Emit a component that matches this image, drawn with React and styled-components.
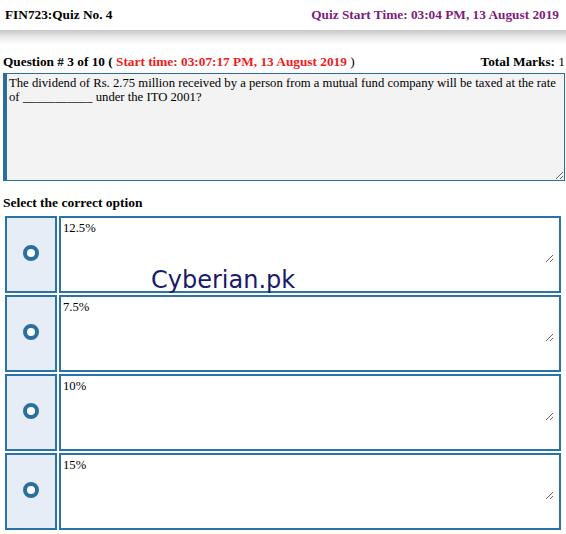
import React from "react";
import styled, { createGlobalStyle } from "styled-components";

const Global = createGlobalStyle`
  html, body { margin: 0; padding: 0; background: #fff; }
  body { font-family: "Liberation Serif", "Times New Roman", serif; color: #000; }
  * { box-sizing: border-box; }
`;

const Page = styled.div`
  position: relative;
  width: 566px;
  min-height: 534px;
`;

const Header = styled.div`
  height: 30px;
  display: flex;
  align-items: center;
  justify-content: space-between;
  padding: 0 7px 0 5px;
  font-weight: bold;
  font-size: 13.3px;
`;

const Purple = styled.span`
  color: #7d1c7d;
`;

const Shadow = styled.div`
  height: 13px;
  background: linear-gradient(#c8c8c8, #ececec 60%, #fafafa);
`;

const Body = styled.div`
  padding: 0 1px 0 3px;
`;

const QuestionLine = styled.div`
  display: flex;
  justify-content: space-between;
  font-weight: bold;
  font-size: 13.3px;
  margin-top: 10px;
  height: 18px;
  align-items: center;
`;

const Red = styled.span`
  color: #f21b1b;
`;

const Normal = styled.span`
  font-weight: normal;
`;

const QuestionBox = styled.textarea`
  display: block;
  width: 562px;
  height: 108px;
  margin-top: 2px;
  background: #f3f3f3;
  border: 1px solid #2a6f99;
  border-left: 4px solid #2a6f99;
  padding: 2px 2px;
  font-family: "Liberation Serif", "Times New Roman", serif;
  font-size: 12.7px;
  line-height: 14px;
  color: #000;
  outline: none;
`;

const SelectHeading = styled.div`
  font-weight: bold;
  font-size: 13.5px;
  margin-top: 13px;
  height: 18px;
  display: flex;
  align-items: center;
`;

const Options = styled.div`
  display: flex;
  flex-direction: column;
  gap: 2px;
  margin-top: 4px;
  padding-left: 2px;
`;

const OptionRow = styled.div`
  display: flex;
  gap: 2px;
  height: 77px;
`;

const RadioCell = styled.div`
  width: 52px;
  height: 77px;
  border: 2px solid #2a73a8;
  background: #e6edf7;
  display: flex;
  align-items: center;
  justify-content: center;
  padding-bottom: 4px;
`;

const Radio = styled.span`
  width: 16px;
  height: 16px;
  border-radius: 50%;
  border: 4px solid #2b6f9c;
  background: #fff;
`;

const OptionCell = styled.div`
  width: 502px;
  height: 77px;
  border: 2px solid #2a73a8;
  background: #fff;
  padding: 1px 5px 0 1px;
`;

const OptionText = styled.textarea`
  display: block;
  width: 100%;
  height: 44px;
  border: none;
  background: transparent;
  padding: 2px 1px;
  font-family: "Liberation Serif", "Times New Roman", serif;
  font-size: 12.7px;
  line-height: 14px;
  color: #000;
  outline: none;
`;

const Watermark = styled.div`
  position: absolute;
  left: 151px;
  top: 266px;
  font-family: "DejaVu Sans", Verdana, sans-serif;
  font-size: 24px;
  color: #1a1a6b;
  pointer-events: none;
`;

const options = ["12.5%", "7.5%", "10%", "15%"];

export default function App() {
  return (
    <Page>
      <Global />
      <Header>
        <span>FIN723:Quiz No. 4</span>
        <Purple>Quiz Start Time: 03:04 PM, 13 August 2019</Purple>
      </Header>
      <Shadow />
      <Body>
        <QuestionLine>
          <span>
            Question # 3 of 10 ( <Red>Start time: 03:07:17 PM, 13 August 2019</Red> <Normal>)</Normal>
          </span>
          <span>
            Total Marks: <Normal>1</Normal>
          </span>
        </QuestionLine>
        <QuestionBox
          readOnly
          defaultValue="The dividend of Rs. 2.75 million received by a person from a mutual fund company will be taxed at the rate of ___________ under the ITO 2001?"
        />
        <SelectHeading>Select the correct option</SelectHeading>
        <Options>
          {options.map((o) => (
            <OptionRow key={o}>
              <RadioCell>
                <Radio />
              </RadioCell>
              <OptionCell>
                <OptionText readOnly defaultValue={o} />
              </OptionCell>
            </OptionRow>
          ))}
        </Options>
      </Body>
      <Watermark>Cyberian.pk</Watermark>
    </Page>
  );
}
